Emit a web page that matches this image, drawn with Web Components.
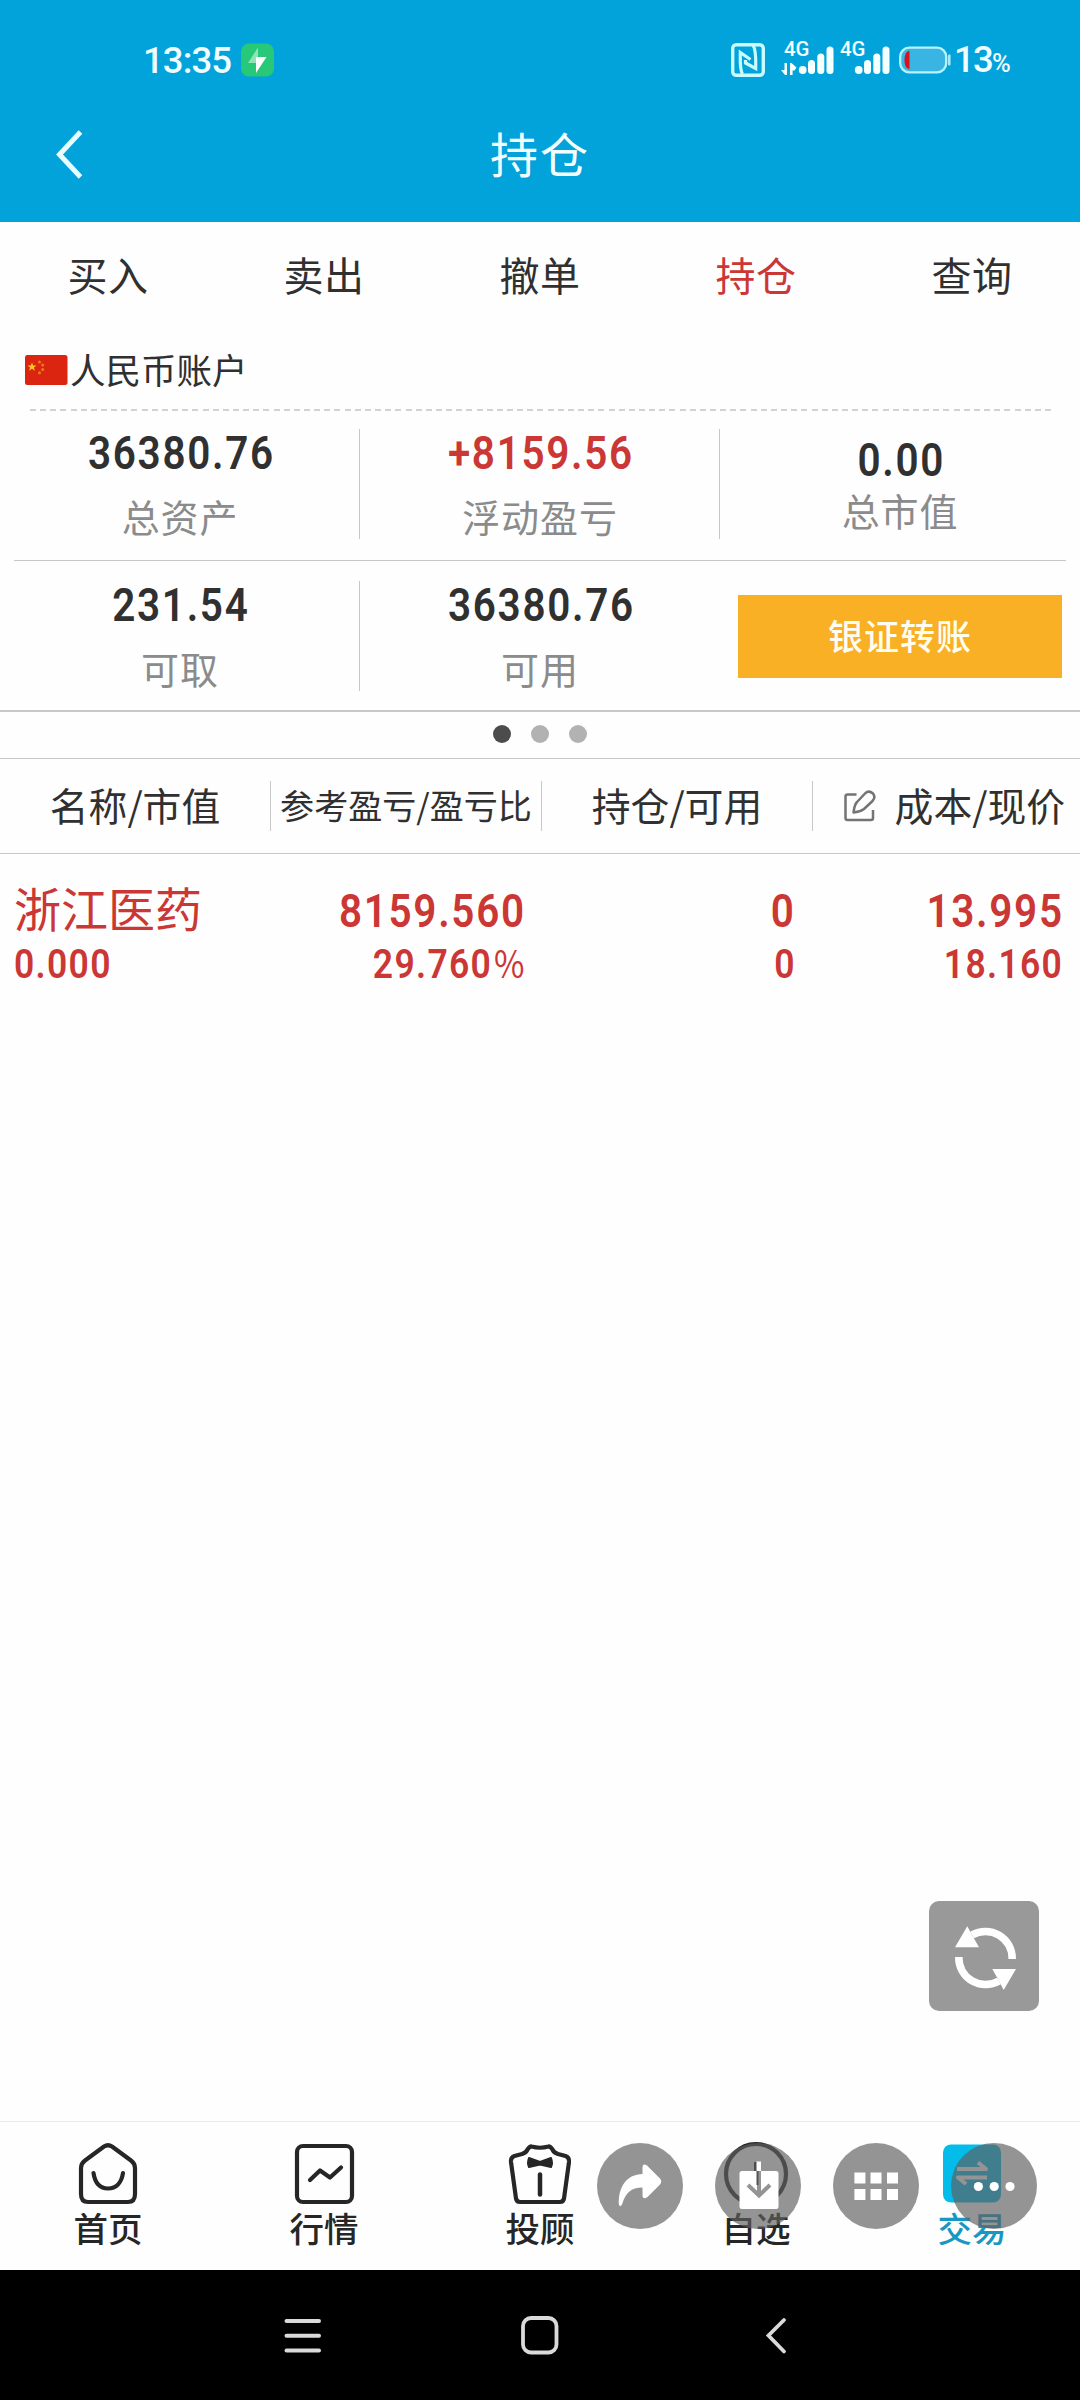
<!DOCTYPE html>
<html lang="zh-CN">
<head>
<meta charset="UTF-8">
<title>持仓</title>
<style>
    * { box-sizing: border-box; }

    body {
        margin: 0;
        width: 1080px;
        height: 2400px;
        overflow: hidden;
        background: #fefefe;
        color: #303030;
        font-family: "Noto Sans CJK SC", sans-serif;
        --up: #cb3735;
        --line: #c8c8c8;
        --brand: #02a2db;
    }

    .page {
        position: relative;
        display: flex;
        flex-direction: column;
        height: 2400px;
    }

    .spacer { flex: 1; }
</style>
</head>
<body>
<div class="page">
    <status-bar time="13:35" level="13"></status-bar>
    <title-bar>持仓</title-bar>
    <trade-tabs items="买入,卖出,撤单,持仓,查询" active="持仓"></trade-tabs>
    <account-head>人民币账户</account-head>
    <metric-row>
        <metric-cell value="36380.76" label="总资产"></metric-cell>
        <metric-cell value="+8159.56" label="浮动盈亏" style="color: var(--up)"></metric-cell>
        <metric-cell value="0.00" label="总市值" compact></metric-cell>
    </metric-row>
    <metric-row last>
        <metric-cell value="231.54" label="可取"></metric-cell>
        <metric-cell value="36380.76" label="可用" open></metric-cell>
        <transfer-button>银证转账</transfer-button>
    </metric-row>
    <pager-dots></pager-dots>
    <holdings-head></holdings-head>
    <holding-row name="浙江医药" market="0.000" profit="8159.560" ratio="29.760"
        held="0" usable="0" cost="13.995" price="18.160"></holding-row>
    <div class="spacer"></div>
    <tab-bar>
        <tab-item icon="home">首页</tab-item>
        <tab-item icon="quote">行情</tab-item>
        <tab-item icon="advisor">投顾</tab-item>
        <tab-item icon="watch">自选</tab-item>
        <tab-item icon="trade" active>交易</tab-item>
    </tab-bar>
    <system-nav></system-nav>
    <refresh-button></refresh-button>
    <floating-actions></floating-actions>
</div>

<script>
    // Attaches an open shadow root with the element's own styles.
    function mount(el, styles, html) {
        el.attachShadow({ mode: 'open' }).innerHTML = `
            <style>* { box-sizing: border-box; } ${styles}</style>
            ${html}
        `;
    }

    class StatusBar extends HTMLElement {
        connectedCallback() {
            const bars = `
                <text x="5" y="18" font-family="Roboto" font-weight="500" font-size="20.500" textLength="25.500" lengthAdjust="spacingAndGlyphs">4G</text>
                <circle cx="23.700" cy="32" r="3.900"/>
                <rect x="29" y="22" width="7" height="14" rx="3.500"/>
                <rect x="38.300" y="15.500" width="7" height="20.500" rx="3.500"/>
                <rect x="47.500" y="8.500" width="7" height="27.500" rx="3.500"/>
            `;
            mount(this, `
                :host {
                    display: flex;
                    align-items: center;
                    height: 120px;
                    padding: 0 70px 0 143px;
                    background: var(--brand);
                    color: #effdff;
                    font: 500 36.5px/44px Roboto, sans-serif;
                }
                svg { display: block; }
                .time { width: 98px; letter-spacing: -0.900px; padding-top: 2px; }
                .right { margin-left: auto; display: flex; align-items: center; }
                .nfc { margin-right: 14px; }
                .battery { margin: 0 3px 0 8px; }
                .level { display: flex; align-items: baseline; width: 56px; letter-spacing: -1.800px; padding-top: 2px; }
                .level small { font-size: 25.500px; letter-spacing: 0; }
            `, `
                <span class="time">${this.getAttribute('time')}</span>
                <svg width="34" height="34" viewBox="0 0 34 34">
                    <rect x="0" y="0.5" width="33" height="33" rx="8" fill="#27c877"/>
                    <path d="M17 4.5V20H7z" fill="#8fe3b7"/>
                    <path d="M15 14H25.500L15 30z" fill="#fff"/>
                </svg>
                <div class="right">
                    <svg class="nfc" width="34" height="34" viewBox="0 0 34 34" fill="none" stroke="#c9fbff" stroke-width="3.400">
                        <rect x="1.700" y="1.700" width="30.600" height="30.600" rx="3.500"/>
                        <path d="M11.500 31C8.500 26 9.300 16 9.300 9.500L19.500 16.500M22 2C25.500 8 24.700 17 24.700 25.500L14.500 20V17" stroke-width="3.200"/>
                    </svg>
                    <svg width="56" height="44" viewBox="0 0 56 44" fill="#f4ffff">
                        <path d="M5.500 25H8V37H6L2 32H5.500zM11 37H13.600V32.500H15.500L17.500 29.500L12.500 25H11z"/>
                        ${bars}
                    </svg>
                    <svg width="56" height="44" viewBox="0 0 56 44" fill="#f4ffff">${bars}</svg>
                    <svg class="battery" width="52" height="28" viewBox="0 0 52 28">
                        <rect x="1.200" y="1.700" width="46" height="24.600" rx="9" fill="#3ab4e2" stroke="#b5f4fb" stroke-width="2.300"/>
                        <path d="M10.500 5V23C7 23 5.500 19 5.500 14S7 5 10.500 5z" fill="#d8131c"/>
                        <rect x="49" y="8.500" width="2.600" height="11" rx="1" fill="#a5eaf8"/>
                    </svg>
                    <div class="level">${this.getAttribute('level')}<small>%</small></div>
                </div>
            `);
        }
    }
    customElements.define('status-bar', StatusBar);

    class TitleBar extends HTMLElement {
        connectedCallback() {
            mount(this, `
                :host {
                    display: grid;
                    grid-template-columns: 140px 1fr 140px;
                    height: 102px;
                    padding-bottom: 33px;
                    align-items: center;
                    background: var(--brand);
                    color: #f3ffff;
                    font-size: 48px;
                    line-height: 64px;
                    letter-spacing: 2px;
                    text-align: center;
                }
                svg { margin-left: 55px; display: block; }
                span { padding-bottom: 5px; }
            `, `
                <svg width="28" height="50" viewBox="0 0 28 50" fill="none" stroke="#e9fdff" stroke-width="5">
                    <path d="M25.500 2L4.500 24.500L25.500 47"/>
                </svg>
                <span><slot></slot></span>
            `);
        }
    }
    customElements.define('title-bar', TitleBar);

    class TradeTabs extends HTMLElement {
        connectedCallback() {
            const active = this.getAttribute('active');
            const tabs = this.getAttribute('items').split(',')
                .map(t => `<span class="${t === active ? 'on' : ''}">${t}</span>`).join('');
            mount(this, `
                :host {
                    display: grid;
                    grid-template-columns: repeat(5, 1fr);
                    height: 106px;
                    font-size: 40px;
                    line-height: 104px;
                    text-align: center;
                    letter-spacing: 0.6px;
                }
                .on { color: var(--up); }
            `, tabs);
        }
    }
    customElements.define('trade-tabs', TradeTabs);

    class AccountHead extends HTMLElement {
        connectedCallback() {
            mount(this, `
                :host {
                    display: flex;
                    align-items: center;
                    height: 83px;
                    margin: 0 27px 0 25px;
                    font-size: 35.500px;
                    line-height: 60px;
                    background: repeating-linear-gradient(90deg, #d2d2d2 0 6px, transparent 6px 10.150px)
                        5px 100% / 1023px 2px no-repeat;
                }
                svg { margin-right: 2px; }
                span { padding-bottom: 2px; }
            `, `
                <svg width="43" height="32" viewBox="0 0 43 32">
                    <rect x="0" y="1" width="42.500" height="30" rx="2.500" fill="#dc2510"/>
                    <path d="M7 8.500L8.200 11.600H11.500L8.900 13.600L9.900 16.700L7 14.800L4.100 16.700L5.100 13.600L2.500 11.600H5.800z" fill="#fcc81c"/>
                    <g fill="#ee7a1c">
                        <circle cx="14.500" cy="8" r="1.500"/>
                        <circle cx="17.700" cy="11" r="1.500"/>
                        <circle cx="17.700" cy="15.500" r="1.500"/>
                        <circle cx="14.500" cy="18.700" r="1.500"/>
                    </g>
                </svg>
                <span><slot></slot></span>
            `);
        }
    }
    customElements.define('account-head', AccountHead);

    // Narrow tabular figures, built by squeezing Roboto horizontally.
    class FigureText extends HTMLElement {
        connectedCallback() {
            mount(this, `
                :host {
                    display: inline-block;
                    font-family: Roboto, sans-serif;
                    font-weight: 600;
                    font-size: 46.500px;
                    line-height: 46px;
                    letter-spacing: 1.950px;
                    margin-right: -1.950px;
                    transform: scaleX(0.87);
                    transform-origin: var(--origin, center);
                    white-space: nowrap;
                }
                :host([small]) {
                    font-size: 40.800px;
                    line-height: 40px;
                    letter-spacing: 1.500px;
                    margin-right: -1.500px;
                }
            `, '<slot></slot>');
        }
    }
    customElements.define('figure-text', FigureText);

    class MetricRow extends HTMLElement {
        connectedCallback() {
            mount(this, `
                :host {
                    --top: 18px;
                    display: grid;
                    grid-template-columns: 346px 360px 346px;
                    height: 150px;
                    margin: 0 14px;
                    border-bottom: 1px solid var(--line);
                }
                :host([last]) {
                    --top: 20px;
                    grid-template-columns: repeat(3, 1fr);
                    height: 151px;
                    margin: 0;
                    border-bottom: 2px solid var(--line);
                }
                :host(:not([last])) ::slotted(:first-child) { margin-left: -14px; }
                :host(:not([last])) ::slotted(:last-child) { margin-right: -14px; }
            `, '<slot></slot>');
        }
    }
    customElements.define('metric-row', MetricRow);

    class MetricCell extends HTMLElement {
        connectedCallback() {
            mount(this, `
                :host {
                    display: flex;
                    flex-direction: column;
                    align-items: center;
                    padding-top: calc(var(--top) + 1px);
                    background: linear-gradient(var(--line), var(--line)) 100% var(--top) / 1px 110px no-repeat;
                }
                :host([open]) { background: none; }
                :host([compact]) { padding-top: 26px; background: none; }
                figure-text { margin-bottom: 17px; }
                :host([compact]) figure-text { margin-bottom: 4px; }
                .label {
                    color: #8b8b8b;
                    font-size: 38px;
                    line-height: 46px;
                    letter-spacing: 0.900px;
                }
            `, `
                <figure-text>${this.getAttribute('value')}</figure-text>
                <span class="label">${this.getAttribute('label')}</span>
            `);
        }
    }
    customElements.define('metric-cell', MetricCell);

    class TransferButton extends HTMLElement {
        connectedCallback() {
            mount(this, `
                :host {
                    display: block;
                    height: 83px;
                    margin: 34px 18px 0;
                    background: #f9b024;
                    color: #fffdf0;
                    font-size: 35px;
                    font-weight: 500;
                    line-height: 79px;
                    letter-spacing: 1px;
                    text-align: center;
                }
            `, '<slot></slot>');
        }
    }
    customElements.define('transfer-button', TransferButton);

    class PagerDots extends HTMLElement {
        connectedCallback() {
            mount(this, `
                :host {
                    display: flex;
                    justify-content: center;
                    align-items: center;
                    gap: 20px;
                    height: 47px;
                    padding-right: 1px;
                    border-bottom: 1px solid var(--line);
                }
                i { width: 18px; height: 18px; border-radius: 50%; background: #b2b2b2; margin-bottom: 3px; }
                .on { background: #4c4c4c; }
            `, '<i class="on"></i><i></i><i></i>');
        }
    }
    customElements.define('pager-dots', PagerDots);

    class HoldingsHead extends HTMLElement {
        connectedCallback() {
            mount(this, `
                :host {
                    display: grid;
                    grid-template-columns: 271px 271px 271px 267px;
                    align-items: center;
                    height: 95px;
                    border-bottom: 1px solid var(--line);
                    font-size: 38.800px;
                }
                div {
                    display: flex;
                    justify-content: center;
                    align-items: center;
                    height: 50px;
                    white-space: nowrap;
                    border-right: 1px solid var(--line);
                }
                span { line-height: 50px; padding-bottom: 4px; }
                .narrow { font-size: 34.100px; }
                .end { border: 0; justify-content: flex-end; padding-right: 15px; }
                svg { margin-right: 19px; }
            `, `
                <div><span>名称/市值</span></div>
                <div class="narrow"><span>参考盈亏/盈亏比</span></div>
                <div><span>持仓/可用</span></div>
                <div class="end">
                    <svg width="32" height="32" viewBox="0 0 32 32" fill="none" stroke="#747474" stroke-width="2.500" stroke-linejoin="round">
                        <path d="M12.500 4.500H3.500Q1.500 4.500 1.500 6.500V28Q1.500 30 3.500 30H27Q29 30 29 28V20"/>
                        <path d="M9.500 22.500Q10.500 14.500 13 12L21.500 3Q25 0 29 3.500Q32 7.500 28.500 11L20 19Q16 22 9.500 22.500z"/>
                    </svg>
                    <span>成本/现价</span>
                </div>
            `);
        }
    }
    customElements.define('holdings-head', HoldingsHead);

    class HoldingRow extends HTMLElement {
        connectedCallback() {
            const v = k => this.getAttribute(k);
            mount(this, `
                :host {
                    display: grid;
                    grid-template-columns: 240px 270px 270px 1fr;
                    height: 150px;
                    margin-right: 18px;
                    padding: 28px 0 0 14px;
                    color: var(--up);
                }
                div { display: flex; flex-direction: column; align-items: flex-end; --origin: right; }
                .first { align-items: flex-start; --origin: left; }
                .name { font-size: 47px; line-height: 56px; height: 57px; margin-top: -3px; }
                figure-text { padding-top: 6px; }
                figure-text[small] { padding-top: 10px; }
                .first figure-text[small] { padding-top: 8px; }
                b { font-family: "Noto Sans CJK SC"; font-weight: 400; font-size: 38px; line-height: 30px; margin-left: 2px; }
            `, `
                <div class="first">
                    <span class="name">${v('name')}</span>
                    <figure-text small>${v('market')}</figure-text>
                </div>
                <div>
                    <figure-text>${v('profit')}</figure-text>
                    <figure-text small>${v('ratio')}<b>%</b></figure-text>
                </div>
                <div>
                    <figure-text>${v('held')}</figure-text>
                    <figure-text small>${v('usable')}</figure-text>
                </div>
                <div>
                    <figure-text>${v('cost')}</figure-text>
                    <figure-text small>${v('price')}</figure-text>
                </div>
            `);
        }
    }
    customElements.define('holding-row', HoldingRow);

    class RefreshButton extends HTMLElement {
        connectedCallback() {
            mount(this, `
                :host {
                    position: absolute;
                    right: 41px;
                    top: 1901px;
                    width: 110px;
                    height: 110px;
                    border-radius: 10px;
                    background: #999;
                }
            `, `
                <svg width="110" height="110" viewBox="0 0 110 110" fill="#fff">
                    <g fill="none" stroke="#fff" stroke-width="7.500">
                        <path d="M83.200 58A26.800 26.800 0 0 0 43 34"/>
                        <path d="M29.800 56A26.800 26.800 0 0 0 70 80"/>
                    </g>
                    <path d="M26 46.300L38.300 25.300L43 34L50 46.300z"/>
                    <path d="M63.300 68H87L74.700 89L70 80z"/>
                </svg>
            `);
        }
    }
    customElements.define('refresh-button', RefreshButton);

    class TabBar extends HTMLElement {
        connectedCallback() {
            mount(this, `
                :host {
                    display: grid;
                    grid-template-columns: repeat(5, 1fr);
                    height: 149px;
                    border-top: 1px solid #e9e9e9;
                }
            `, '<slot></slot>');
        }
    }
    customElements.define('tab-bar', TabBar);

    const TAB_ICONS = {
        home: `<path d="M10 24.500Q6 27.500 6 32V58Q6 66 13 66H53Q60 66 60 58V32Q60 27.500 56 24.500L37 10.500Q33 8 29 10.500z"/>
            <path d="M18.500 37C20 47 25 52.500 33 52.500S46.500 47 48 37" stroke-linecap="round"/>`,
        quote: `<rect x="6" y="10" width="55" height="56" rx="6"/>
            <path d="M19 44L29 34.500L39 41.500L50 31.500" stroke-linecap="round"/>`,
        advisor: `<path d="M24.500 10.500Q33 13 41.500 10.500Q43 10 45.500 13.500Q46.500 16.500 51 18L58.500 20Q62.500 21.500 62 26L57 62.500Q56.300 66 53 66H13Q9.700 66 9 62.500L4 26Q3.500 21.500 7.500 20L15 18Q19.500 16.500 20.500 13.500Q23 10 24.500 10.500z"/>
            <path d="M33 38.500V58.500" stroke-linecap="round" stroke-width="4.500"/>
            <path d="M22 22L33 26L44 22Q46 27 44 31L33 28.500L22 31Q20 27 22 22z" fill="#262626" stroke-width="2"/>`,
        watch: `<circle cx="33" cy="38" r="30"/><path d="M33 26V40H37" stroke-width="4"/>`,
        trade: `<rect x="4" y="8.500" width="58" height="58" rx="8" fill="#04bcea" stroke="none"/>
            <path d="M18 33H47L39 26.500M48 41.500H19L27 48" stroke="#fff" stroke-width="4"/>`
    };

    class TabItem extends HTMLElement {
        connectedCallback() {
            mount(this, `
                :host {
                    display: flex;
                    flex-direction: column;
                    align-items: center;
                    padding-top: 14px;
                    color: #262626;
                    font-size: 34.500px;
                    font-weight: 500;
                    line-height: 44px;
                }
                :host([active]) { color: #1797c2; }
                svg { flex: none; display: block; }
                span { margin-top: -5px; }
            `, `
                <svg width="66" height="74" viewBox="0 0 66 74" fill="none" stroke="#262626" stroke-width="4.200" stroke-linejoin="round">
                    ${TAB_ICONS[this.getAttribute('icon')]}
                </svg>
                <span><slot></slot></span>
            `);
        }
    }
    customElements.define('tab-item', TabItem);

    // Round translucent tools floating over the tab bar.
    class FloatingActions extends HTMLElement {
        connectedCallback() {
            mount(this, `
                :host {
                    position: absolute;
                    left: 597px;
                    top: 2143px;
                    display: flex;
                    gap: 32px;
                }
                svg { display: block; border-radius: 50%; background: rgba(95, 95, 95, 0.67); }
            `, `
                <svg width="86" height="86" viewBox="0 0 86 86" fill="#fff">
                    <path d="M45.500 24Q46 20 50 22.500L63 35.500Q65.500 38.500 63 41.500L50.500 54Q46 57 45.500 53V44.500C34 44.500 28.500 50 25 61.500Q22.500 65 21.800 61C21.500 43 30 31.500 45.500 31z"/>
                </svg>
                <svg width="86" height="86" viewBox="0 0 86 86" fill="#fff">
                    <path d="M41.500 18.500H46V28H61Q63.500 28 63.500 30.500V63.500Q63.500 66 61 66H27Q24.500 66 24.500 63.500V30.500Q24.500 28 27 28H41.500z"/>
                    <path d="M44 28V53M33 42L44 52.500L55 42" fill="none" stroke="#949494" stroke-width="4"/>
                    <path d="M42.500 28V42" stroke="#555" stroke-width="2"/>
                </svg>
                <svg width="86" height="86" viewBox="0 0 86 86" fill="#fff">
                    <rect x="21.400" y="29.500" width="11" height="11"/><rect x="37.500" y="29.500" width="11" height="11"/><rect x="54" y="29.500" width="11" height="11"/>
                    <rect x="21.400" y="46" width="11" height="11"/><rect x="37.500" y="46" width="11" height="11"/><rect x="54" y="46" width="11" height="11"/>
                </svg>
                <svg width="86" height="86" viewBox="0 0 86 86" fill="#fff">
                    <circle cx="27.400" cy="43.500" r="4.600"/><circle cx="43.200" cy="43.500" r="4.600"/><circle cx="59" cy="43.500" r="4.600"/>
                </svg>
            `);
        }
    }
    customElements.define('floating-actions', FloatingActions);

    class SystemNav extends HTMLElement {
        connectedCallback() {
            mount(this, `
                :host {
                    display: flex;
                    justify-content: center;
                    gap: 196px;
                    height: 130px;
                    padding-top: 45px;
                    background: #000;
                }
            `, `
                <svg width="42" height="42" viewBox="0 0 42 42" stroke="#dadada" stroke-width="4" stroke-linecap="round">
                    <path d="M5.500 6H38M5.500 20.800H38M5.500 35.500H38"/>
                </svg>
                <svg width="42" height="42" viewBox="0 0 42 42" fill="none" stroke="#dadada" stroke-width="3.800">
                    <rect x="4" y="3" width="33.500" height="34.500" rx="8"/>
                </svg>
                <svg width="42" height="42" viewBox="0 0 42 42" fill="none" stroke="#dadada" stroke-width="3.800" stroke-linecap="round">
                    <path d="M27 5L11.500 20.500L27 36.500"/>
                </svg>
            `);
        }
    }
    customElements.define('system-nav', SystemNav);
</script>
</body>
</html>
